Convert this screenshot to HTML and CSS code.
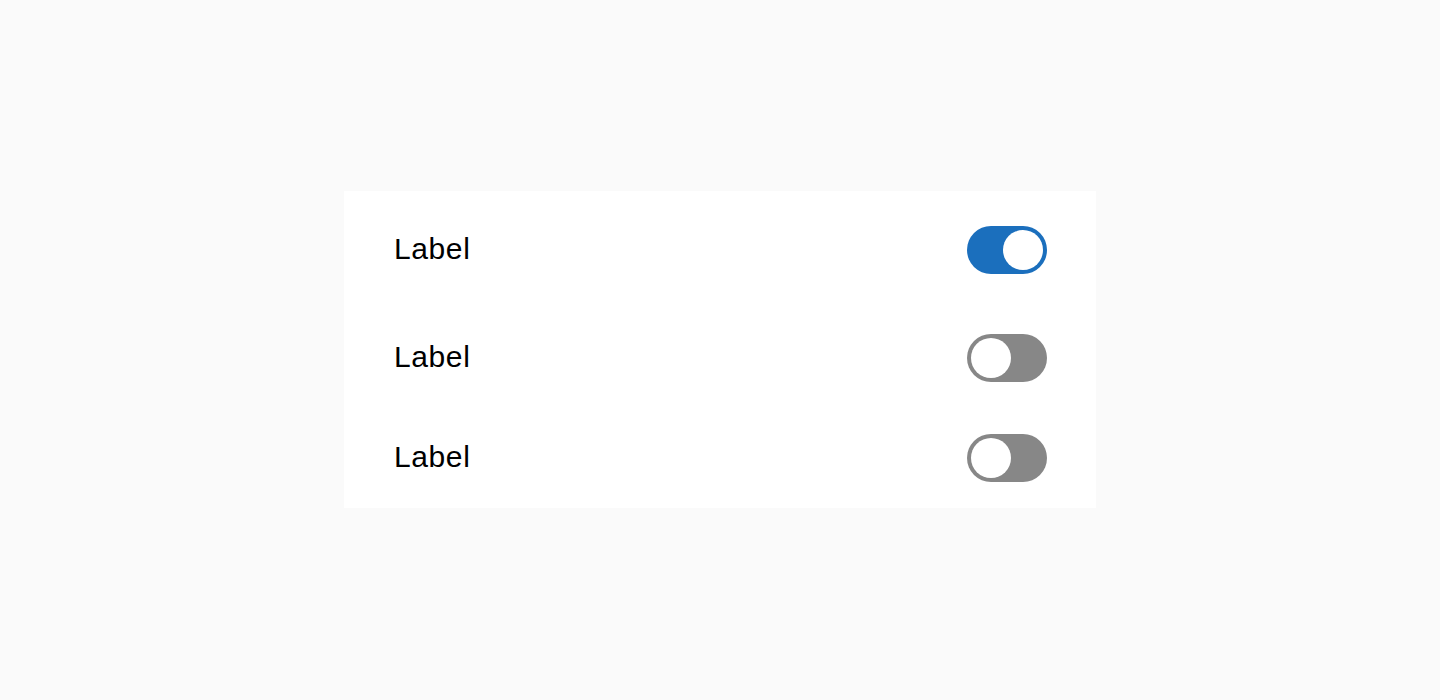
FILE: index.html
```html
<!DOCTYPE html>
<html lang="en">
<head>
    <meta charset="UTF-8">
    <meta name="viewport" content="width=device-width, initial-scale=1.0">
    <title>Toggle List</title>
    <link rel="stylesheet" href="styles.css">
</head>
<body>
    <main class="card">
        <div class="row row-first">
            <span class="label">Label</span>
            <span class="toggle on"><span class="knob"></span></span>
        </div>
        <div class="row row-mid">
            <span class="label">Label</span>
            <span class="toggle"><span class="knob"></span></span>
        </div>
        <div class="row row-last">
            <span class="label">Label</span>
            <span class="toggle"><span class="knob"></span></span>
        </div>
    </main>
</body>
</html>
```

FILE: styles.css
```css
body {
    font-family: 'Liberation Sans', Arial, sans-serif;
    background: #fafafa;
    margin: 0;
    padding-top: 191px;
    display: flex;
    justify-content: center;
}
.card {
    width: 752px;
    height: 317px;
    box-sizing: border-box;
    background: #ffffff;
    padding: 35px 49px 26px 50px;
    display: flex;
    flex-direction: column;
}
.row {
    display: flex;
    align-items: center;
    justify-content: space-between;
    height: 48px;
}
.row-first {
    margin-bottom: 60px;
}
.row-mid {
    margin-bottom: 52px;
}
.label {
    font-size: 30px;
    letter-spacing: 0.6px;
    color: #000000;
    margin-top: -2px;
}
.toggle {
    width: 80px;
    height: 48px;
    border-radius: 24px;
    background: #878787;
    box-sizing: border-box;
    padding: 4px;
    display: flex;
    justify-content: flex-start;
}
.toggle.on {
    background: #1b6fbd;
    justify-content: flex-end;
}
.knob {
    width: 40px;
    height: 40px;
    border-radius: 50%;
    background: #ffffff;
}
```
